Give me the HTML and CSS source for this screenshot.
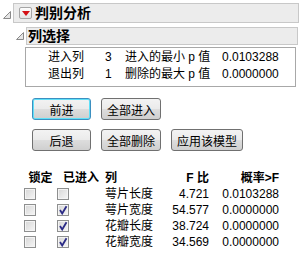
FILE: index.html
```html
<!DOCTYPE html>
<html lang="zh">
<head>
  <meta charset="UTF-8">
  <title>判别分析</title>
  <link rel="stylesheet" href="styles.css">
</head>
<body>

  <div class="report">
    <!-- 标题栏 -->
    <div class="outline lvl1">
      <svg class="twisty" width="8" height="8" viewBox="0 0 8 8"><polygon points="7.5,0.5 7.5,7.5 0.5,7.5" /></svg>
      <div class="bar bar-main">
        <span class="menu-btn"><svg width="8" height="5" viewBox="0 0 8 5"><polygon points="0,0 8,0 4,5" /></svg></span>
        <span class="bar-title">判别分析</span>
      </div>
    </div>

    <div class="outline lvl2">
      <svg class="twisty" width="8" height="8" viewBox="0 0 8 8"><polygon points="7.5,0.5 7.5,7.5 0.5,7.5" /></svg>
      <div class="bar bar-sub">
        <span class="bar-title">列选择</span>
      </div>
    </div>

    <!-- 统计 -->
    <div class="stats">
      <span>进入列</span><span>3</span><span>进入的最小 p 值</span><span>0.0103288</span>
      <span>退出列</span><span>1</span><span>删除的最大 p 值</span><span>0.0000000</span>
    </div>

    <!-- 按钮 -->
    <div class="actions">
      <div class="btn-row">
        <button class="btn btn-step is-default">前进</button>
        <button class="btn">全部进入</button>
      </div>
      <div class="btn-row">
        <button class="btn btn-step">后退</button>
        <button class="btn">全部删除</button>
        <button class="btn">应用该模型</button>
      </div>
    </div>

    <!-- 列表 -->
    <div class="cols">
      <span class="th center">锁定</span>
      <span class="th center">已进入</span>
      <span class="th">列</span>
      <span class="th num">F 比</span>
      <span class="th num">概率&gt;F</span>

      <span><i class="cb"></i></span>
      <span><i class="cb"></i></span>
      <span>萼片长度</span>
      <span class="num">4.721</span>
      <span class="num">0.0103288</span>

      <span><i class="cb"></i></span>
      <span><i class="cb on"><svg width="10" height="10" viewBox="0 0 10 10"><path d="M2 5 L4.2 8.5 L8.5 1.2" /></svg></i></span>
      <span>萼片宽度</span>
      <span class="num">54.577</span>
      <span class="num">0.0000000</span>

      <span><i class="cb"></i></span>
      <span><i class="cb on"><svg width="10" height="10" viewBox="0 0 10 10"><path d="M2 5 L4.2 8.5 L8.5 1.2" /></svg></i></span>
      <span>花瓣长度</span>
      <span class="num">38.724</span>
      <span class="num">0.0000000</span>

      <span><i class="cb"></i></span>
      <span><i class="cb on"><svg width="10" height="10" viewBox="0 0 10 10"><path d="M2 5 L4.2 8.5 L8.5 1.2" /></svg></i></span>
      <span>花瓣宽度</span>
      <span class="num">34.569</span>
      <span class="num">0.0000000</span>
    </div>
  </div>

</body>
</html>
```

FILE: styles.css
```css
/* 全局 */
body {
  margin: 0;
  background: #fff;
  color: #000;
  font-family: "Liberation Sans", "Noto Sans CJK SC", sans-serif;
  font-size: 12px;
}

/* 标题栏 */
.outline {
  display: flex;
  align-items: center;
}

.lvl1 {
  margin: 3px 1px 0 3px;
}

.lvl2 {
  margin: 4px 2px 0 16px;
}

.twisty {
  flex: none;
  margin-right: 2px;
}

.lvl1 .twisty {
  margin-top: 4px;
}

.twisty polygon {
  fill: #e6e6e6;
  stroke: #8a8a8a;
  stroke-width: 1;
}

.bar {
  flex: 1;
  display: flex;
  align-items: center;
  box-sizing: border-box;
  background-color: #ececec;
  border: 1px solid #c8c8c8;
}

.bar-main {
  height: 20px;
  padding-left: 5px;
}

.bar-sub {
  height: 18px;
  padding-left: 1px;
}

.bar-title {
  font-size: 14px;
  font-weight: bold;
  line-height: 16px;
}

.menu-btn {
  width: 13px;
  height: 12px;
  box-sizing: border-box;
  border: 1px solid #a5a5a5;
  border-radius: 2px;
  background: linear-gradient(#fdfdfd, #e4e4e4);
  display: flex;
  align-items: center;
  justify-content: center;
  margin-right: 3px;
}

.menu-btn polygon {
  fill: #d40f14;
}

/* 统计 */
.stats {
  margin: 2px 4px 0 25px;
  height: 40px;
  box-sizing: border-box;
  border: 1px solid #a8a8a8;
  padding: 1px 0 0 22px;
  display: grid;
  grid-template-columns: 57px 20px 97px auto;
  grid-auto-rows: 17px;
  line-height: 17px;
}

/* 按钮 */
.actions {
  margin-top: 11px;
  padding-left: 32px;
}

.btn-row {
  display: flex;
  gap: 10px;
}

.btn-row + .btn-row {
  margin-top: 9px;
}

.btn {
  height: 22px;
  padding: 0 5px;
  font-family: inherit;
  font-size: 12px;
  color: #000;
  border: 1px solid #707070;
  border-radius: 3px;
  background: linear-gradient(#f3f3f3 0%, #ebebeb 48%, #dddddd 52%, #cfcfcf 100%);
}

.btn-step {
  width: 59px;
}

.btn.is-default {
  border-color: #3c8fc0;
  box-shadow: inset 0 0 0 1px #5fe0f8;
}

/* 列表 */
.cols {
  margin-top: 19px;
  padding-left: 24px;
  display: grid;
  grid-template-columns: 33px 48px 60px 44px 70px;
  grid-auto-rows: 16px;
  line-height: 16px;
  align-items: center;
}

.th {
  font-weight: bold;
  margin-bottom: 1px;
}

.center {
  text-align: center;
}

.num {
  text-align: right;
}

.cb {
  display: flex;
  align-items: center;
  justify-content: center;
  width: 12px;
  height: 12px;
  box-sizing: border-box;
  border: 1px solid #8e8f8f;
  background: linear-gradient(135deg, #d6d6d6, #f6f6f6);
  box-shadow: inset 0 0 0 1px #f4f4f4;
}

.cb path {
  fill: none;
  stroke: #2b2b86;
  stroke-width: 1.8;
}
```
